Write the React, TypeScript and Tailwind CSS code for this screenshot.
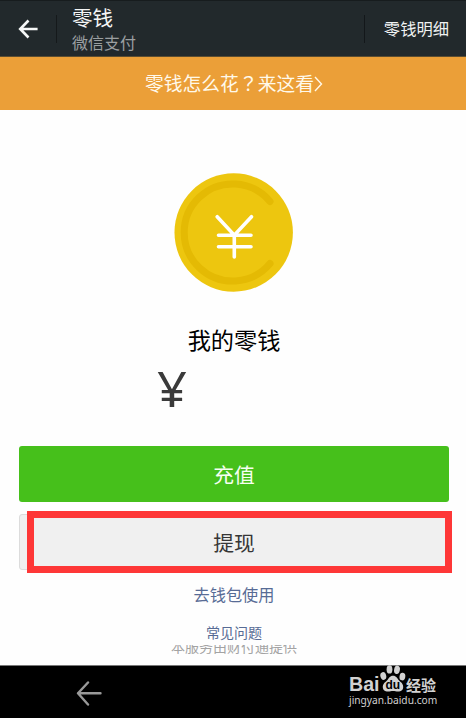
function BackArrow() {
  return (
    <svg width="20" height="20" viewBox="0 0 20 20" fill="none" stroke="#f5f7f7" strokeWidth="2.6">
      <path d="M10.5 1.5 2.2 10l8.3 8.5M2.5 10H19.6" />
    </svg>
  );
}

function Coin() {
  return (
    <svg className="block" width="120" height="120" viewBox="0 0 120 120" fill="none" strokeLinecap="round">
      <circle cx="59.7" cy="59.5" r="59.2" fill="#edc60f" />
      <path d="M96 28.500A48.500 48.500 0 1 0 96 90.500" stroke="#e4ba04" strokeWidth="7" />
      <path d="M43.2 43.7 60.3 62.2 77.5 43.7M44.5 62.2H77M44.500 73.800H77M60.300 62.200V84" stroke="#fff" strokeWidth="3.6" />
    </svg>
  );
}

function Paw() {
  return (
    <svg className="block" width="26" height="27" viewBox="0 0 26 27" fill="#d2d2d2">
      <ellipse cx="9.5" cy="4.4" rx="2.9" ry="4.2" />
      <ellipse cx="17" cy="4.8" rx="2.9" ry="4.2" transform="rotate(10 17 4.8)" />
      <ellipse cx="3.3" cy="11" rx="2.9" ry="3.9" transform="rotate(-15 3.3 11)" />
      <ellipse cx="22.4" cy="11.6" rx="2.9" ry="3.8" transform="rotate(8 22.4 11.6)" />
      <path d="M13 10.800c3.300 0 4.100 2.700 6.100 4.700 2 1.900 4.300 3.500 4.100 6.800-.2 3.400-2.700 4.400-5.200 4.300-1.900-.1-3.200-.5-5-.5s-3 .4-5 .5c-2.600.1-5-1-5.200-4.300-.2-3.300 2.200-4.900 4.200-6.800 2-2 2.700-4.700 6-4.700Z" />
      <text x="12.8" y="24.3" textAnchor="middle" fill="#000" fontFamily="Liberation Sans, sans-serif" fontWeight="700" fontSize="12">du</text>
    </svg>
  );
}

export default function App() {
  return (
    <div className="flex h-[718px] w-[466px] flex-col overflow-hidden bg-[#fefefe] font-['Noto_Sans_CJK_SC',sans-serif] leading-none">
      <header className="flex h-[57px] shrink-0 items-center border-t border-b border-t-[#171c1e] border-b-[#5b4d32] bg-[#22292c] pr-[17px] pl-[18px]">
        <BackArrow />
        <div className="ml-[18px] h-7 w-px bg-[#15191b]" />
        <div className="ml-[15px] flex flex-col gap-[6px]">
          <h1 className="text-[20.6px] leading-[21px] text-[#f4f5f5]">零钱</h1>
          <p className="text-[16px] leading-[17px] text-[#9b9fa1]">微信支付</p>
        </div>
        <div className="ml-auto h-7 w-px bg-[#13171a]" />
        <span className="ml-[19px] text-[16.3px] text-[#f0f2f2]">零钱明细</span>
      </header>

      <div className="flex h-[53px] shrink-0 items-center justify-center bg-[#eb9f38] pl-[2px] text-[18.8px] text-[#fff9ea]">
        <span>
          零钱怎么花<span className="font-['Noto_Sans_CJK_TC',sans-serif]" lang="zh-TW">？</span>来这看
        </span>
        <svg width="9" height="16" viewBox="0 0 9 16" fill="none" stroke="#fff9ea" strokeWidth="1.4">
          <path d="M1 1l6.5 7L1 15" />
        </svg>
      </div>

      <main className="flex h-[555px] shrink-0 flex-col items-center pl-[2px]">
        <div className="mt-[63px] flex w-full justify-center">
          <Coin />
        </div>
        <h2 className="mt-[34px] text-[23.2px] leading-6 text-black">我的零钱</h2>
        <div className="mt-[13px] h-[48px] w-full pl-[155px]">
          <span className="inline-block origin-left scale-x-[1.07] font-['Noto_Sans',sans-serif] text-[49px] leading-[48px] text-[#3a3a3a]">¥</span>
        </div>
        <button className="mt-[34px] h-[56px] w-[430px] shrink-0 rounded-[3px] bg-[#46c01b] text-[20.8px] text-[#f6fff2]">充值</button>
        <div className="relative mt-[12px] h-[56px] w-[430px] shrink-0">
          <button className="h-full w-full rounded-[3px] border border-[#dcdcdc] bg-[#f0f0f0] text-[20.8px] text-[#363636]">提现</button>
          <div className="pointer-events-none absolute -top-[3px] left-[8px] h-[62px] w-[425px] border-[7px] border-[#fe3737]" />
        </div>
        <a className="mt-[16px] text-[16.2px] leading-[17px] text-[#576b95]">去钱包使用</a>
        <a className="mt-[22px] text-[14px] leading-[14px] text-[#576b95]">常见问题</a>
        <div className="mt-[6px] flex h-[9px] items-end overflow-hidden">
          <p className="text-[14px] leading-[16px] text-[#a3a3a3]">本服务由财付通提供</p>
        </div>
      </main>

      <footer className="flex grow items-start justify-between border-t border-[#777] bg-black pr-[29px] pl-[76px]">
        <svg className="mt-[15px]" width="26" height="25" viewBox="0 0 26 25" fill="none" stroke="#999" strokeWidth="2.4" strokeLinecap="round" strokeLinejoin="round">
          <path d="M12 1.5 2 12.3 12 23.5M2 12.3H24.5" />
        </svg>
        <div className="flex w-[88px] flex-col text-[#d2d2d2]">
          <div className="-mt-[1px] flex h-[27px] items-end">
            <span className="w-[31px] shrink-0 font-['Liberation_Sans',sans-serif] text-[19.6px] leading-[15px] font-bold">Bai</span>
            <span className="w-[26px] shrink-0"><Paw /></span>
            <span className="shrink-0 text-[15px] leading-[15px] font-bold">经验</span>
          </div>
          <span className="mt-[1px] font-['Noto_Sans',sans-serif] text-[10.2px] leading-[14px] whitespace-nowrap">jingyan.baidu.com</span>
        </div>
      </footer>
    </div>
  );
}
